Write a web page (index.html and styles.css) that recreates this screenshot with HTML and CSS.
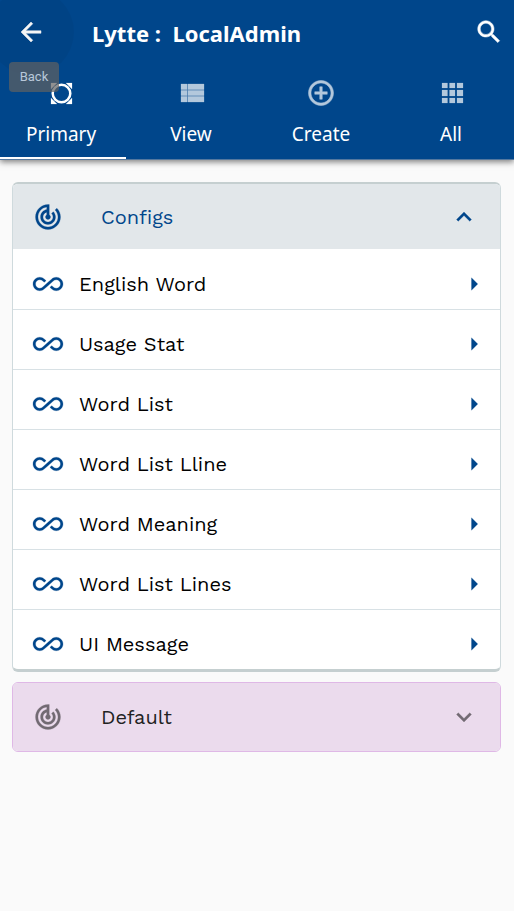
FILE: index.html
```html
<!DOCTYPE html>
<html lang="en">
<head>
<meta charset="utf-8">
<meta name="viewport" content="width=device-width, initial-scale=1">
<title>Lytte : LocalAdmin</title>
<link rel="stylesheet" href="styles.css">
</head>
<body>
<svg class="defs" aria-hidden="true">
  <symbol id="track" viewBox="0 0 24 24"><path d="M19.07 4.93l-1.41 1.41C19.1 7.79 20 9.79 20 12c0 4.42-3.58 8-8 8s-8-3.58-8-8c0-4.08 3.05-7.44 7-7.93v2.02C8.16 6.57 6 9.03 6 12c0 3.31 2.69 6 6 6s6-2.69 6-6c0-1.66-.67-3.16-1.76-4.24l-1.41 1.41C15.55 9.9 16 10.9 16 12c0 2.21-1.79 4-4 4s-4-1.79-4-4c0-1.86 1.28-3.41 3-3.86v2.14c-.6.35-1 .98-1 1.72 0 1.1.9 2 2 2s2-.9 2-2c0-.74-.4-1.38-1-1.72V2h-1C6.48 2 2 6.48 2 12s4.48 10 10 10 10-4.48 10-10c0-2.76-1.12-5.26-2.93-7.07z"/></symbol>
  <symbol id="infinity" viewBox="0 0 24 24"><path d="M18.6 6.62c-1.44 0-2.8.56-3.77 1.53L12 10.66 10.48 12h.01L7.8 14.39c-.64.64-1.49.99-2.4.99-1.87 0-3.39-1.51-3.39-3.38S3.53 8.62 5.4 8.62c.91 0 1.76.35 2.44 1.03l1.13 1 1.51-1.34L9.22 8.2C8.2 7.18 6.84 6.62 5.4 6.62 2.42 6.62 0 9.04 0 12s2.42 5.38 5.4 5.38c1.44 0 2.8-.56 3.77-1.53l2.83-2.5.01.01L13.52 12h-.01l2.69-2.39c.64-.64 1.49-.99 2.4-.99 1.87 0 3.39 1.51 3.39 3.38s-1.52 3.38-3.39 3.38c-.9 0-1.76-.35-2.44-1.03l-1.14-1.01-1.51 1.34 1.27 1.12c1.02 1.01 2.37 1.57 3.82 1.57 2.98 0 5.4-2.41 5.4-5.38s-2.42-5.37-5.4-5.37z"/></symbol>
  <symbol id="caret" viewBox="0 0 24 24"><path d="M10 17l5-5-5-5v10z"/></symbol>
</svg>
<header class="appbar">
  <div class="toolbar">
    <button class="icon-button back" type="button" aria-label="Back">
      <svg class="icon bold" viewBox="0 0 24 24"><path d="M20 11H7.830l5.590-5.590L12 4l-8 8 8 8 1.410-1.410L7.830 13H20v-2z"/></svg>
      <span class="tooltip">Back</span>
    </button>
    <h1 class="title">Lytte :&nbsp; LocalAdmin</h1>
    <button class="icon-button search" type="button" aria-label="Search">
      <svg class="icon bold" viewBox="0 0 24 24"><path d="M15.500 14h-.79l-.28-.27C15.410 12.590 16 11.110 16 9.500 16 5.910 13.090 3 9.500 3S3 5.910 3 9.500 5.910 16 9.500 16c1.610 0 3.090-.59 4.230-1.570l.27.28v.79l5 4.990L20.490 19l-4.990-5zm-6 0C7.010 14 5 11.990 5 9.500S7.010 5 9.500 5 14 7.010 14 9.500 11.990 14 9.500 14z"/></svg>
    </button>
  </div>
  <nav class="tabs">
    <a class="tab active" href="#primary"><svg class="icon" viewBox="0 0 30 30"><circle cx="15.500" cy="15.500" r="8.800" fill="none" stroke="currentColor" stroke-width="2.500"/><path d="M5 5h6l-6 6zM26 5h-6l6 6zM5 26h6l-6-6zM26 26h-6l6-6z"/></svg>Primary</a>
    <a class="tab" href="#view"><svg class="icon" viewBox="0 0 30 30"><path opacity=".45" d="M5 6h23v18H5z"/><path d="M5 6h6v5.500H5zM12 6h16v5.500H12zM5 12.500h6v5H5zM12 12.500h16v5H12zM5 18.500h6V24H5zM12 18.500h16V24H12z"/></svg>View</a>
    <a class="tab" href="#create"><svg class="icon bold" viewBox="0 0 24 24"><path d="M13 7h-2v4H7v2h4v4h2v-4h4v-2h-4V7zm-1-5C6.480 2 2 6.480 2 12s4.480 10 10 10 10-4.480 10-10S17.520 2 12 2zm0 18c-4.410 0-8-3.590-8-8s3.590-8 8-8 8 3.590 8 8-3.590 8-8 8z"/></svg>Create</a>
    <a class="tab" href="#all"><svg class="icon" viewBox="0 0 30 30"><path d="M6 5h5.500v5H6zM13.500 5H19v5h-5.500zM21 5h6v5h-6zM6 12h5.500v6H6zM13.500 12H19v6h-5.500zM21 12h6v6h-6zM6 20h5.500v5H6zM13.500 20H19v5h-5.500zM21 20h6v5h-6z"/></svg>All</a>
  </nav>
</header>
<main class="content">
  <section class="group">
    <button class="group-head" type="button" aria-expanded="true">
      <svg class="icon"><use href="#track"/></svg><span class="group-name">Configs</span>
      <svg class="icon" viewBox="0 0 24 24"><path d="M12 8l-6 6 1.410 1.410L12 10.830l4.590 4.580L18 14z"/></svg>
    </button>
    <ul class="list">
      <li><a class="row" href="#english-word"><svg class="icon"><use href="#infinity"/></svg><span class="row-name">English Word</span><svg class="icon"><use href="#caret"/></svg></a></li>
      <li><a class="row" href="#usage-stat"><svg class="icon"><use href="#infinity"/></svg><span class="row-name">Usage Stat</span><svg class="icon"><use href="#caret"/></svg></a></li>
      <li><a class="row" href="#word-list"><svg class="icon"><use href="#infinity"/></svg><span class="row-name">Word List</span><svg class="icon"><use href="#caret"/></svg></a></li>
      <li><a class="row" href="#word-list-lline"><svg class="icon"><use href="#infinity"/></svg><span class="row-name">Word List Lline</span><svg class="icon"><use href="#caret"/></svg></a></li>
      <li><a class="row" href="#word-meaning"><svg class="icon"><use href="#infinity"/></svg><span class="row-name">Word Meaning</span><svg class="icon"><use href="#caret"/></svg></a></li>
      <li><a class="row" href="#word-list-lines"><svg class="icon"><use href="#infinity"/></svg><span class="row-name">Word List Lines</span><svg class="icon"><use href="#caret"/></svg></a></li>
      <li><a class="row" href="#ui-message"><svg class="icon"><use href="#infinity"/></svg><span class="row-name">UI Message</span><svg class="icon"><use href="#caret"/></svg></a></li>
    </ul>
  </section>
  <section class="group closed">
    <button class="group-head" type="button" aria-expanded="false">
      <svg class="icon"><use href="#track"/></svg><span class="group-name">Default</span>
      <svg class="icon" viewBox="0 0 24 24"><path d="M7.410 8.590L12 13.170l4.590-4.580L18 10l-6 6-6-6z"/></svg>
    </button>
  </section>
</main>
</body>
</html>
```

FILE: styles.css
```css
* { box-sizing: border-box; }
body {
  margin: 0;
  background: #fafafa;
  color: #000;
  font-family: "Work Sans", "Noto Sans", sans-serif;
  font-size: 20px;
}
a { color: inherit; text-decoration: none; }
button { border: 0; padding: 0; background: none; color: inherit; font: inherit; }
svg { display: block; fill: currentColor; flex: none; overflow: visible; }
symbol { overflow: visible; }
.defs { position: absolute; width: 0; height: 0; }
.icon { width: 30px; height: 30px; stroke: currentColor; stroke-width: 0.2; }
.bold { stroke-width: 0.4; }

.appbar {
  position: relative;
  background: #00468b;
  color: #fff;
  border-bottom: 1px solid #54789f;
  box-shadow: 0 2px 6px rgba(0, 0, 0, 0.5);
  font-family: "Noto Sans", sans-serif;
  overflow: hidden;
}
.toolbar { display: flex; align-items: center; height: 64px; padding: 0 10px 0 16px; }
.icon-button { position: relative; }
.back::before {
  content: "";
  position: absolute;
  inset: -28px;
  border-radius: 50%;
  background: rgba(0, 0, 0, 0.04);
}
.tooltip {
  position: absolute;
  z-index: 1;
  top: 45px;
  left: -7px;
  width: 50px;
  border-radius: 4px;
  background: rgba(97, 97, 97, 0.7);
  color: #b8c8d9;
  font: 13px/30px Roboto, sans-serif;
}
.title { flex: 1; margin: 2px 0 0 46px; font-size: 22px; line-height: 32px; font-weight: 700; white-space: nowrap; }
.tabs { display: grid; grid-template-columns: repeat(4, 1fr); margin: 0 -2px 0 -4px; }
.tab {
  display: flex;
  flex-direction: column;
  align-items: center;
  gap: 12px;
  height: 95px;
  padding-top: 14px;
  border-bottom: 2px solid transparent;
  font-size: 19px;
  line-height: 28px;
}
.tab .icon { opacity: 0.7; }
.active { border-color: #fff; }
.tab.active .icon { opacity: 1; }

.content { display: grid; gap: 10px; padding: 22px 13px 22px 12px; }
.group {
  overflow: hidden;
  border: 1px solid #cfdadd;
  border-top: 2px solid #c5cfd0;
  border-bottom: 3px solid #c5cfd0;
  border-radius: 6px;
  background: #fff;
}
.group-head {
  display: flex;
  align-items: center;
  width: 100%;
  height: 65px;
  padding: 0 21px 0 20px;
  background: #e2e7ea;
  color: #00468b;
  text-align: left;
}
.group-name { flex: 1; padding-left: 38px; }
.list { margin: 0; padding: 0; list-style: none; }
.row {
  display: flex;
  align-items: center;
  height: 60px;
  padding: 9px 11px 0 20px;
}
.row .icon { color: #00468b; }
.row-name { flex: 1; padding-left: 16px; }
.list li + li .row { border-top: 1px solid #d8e1e5; }
.closed { border: 1px solid #dfb8e6; }
.closed .group-head { height: 68px; background: #ebdbed; color: #222; }
.closed .icon { color: #726a73; }
```
